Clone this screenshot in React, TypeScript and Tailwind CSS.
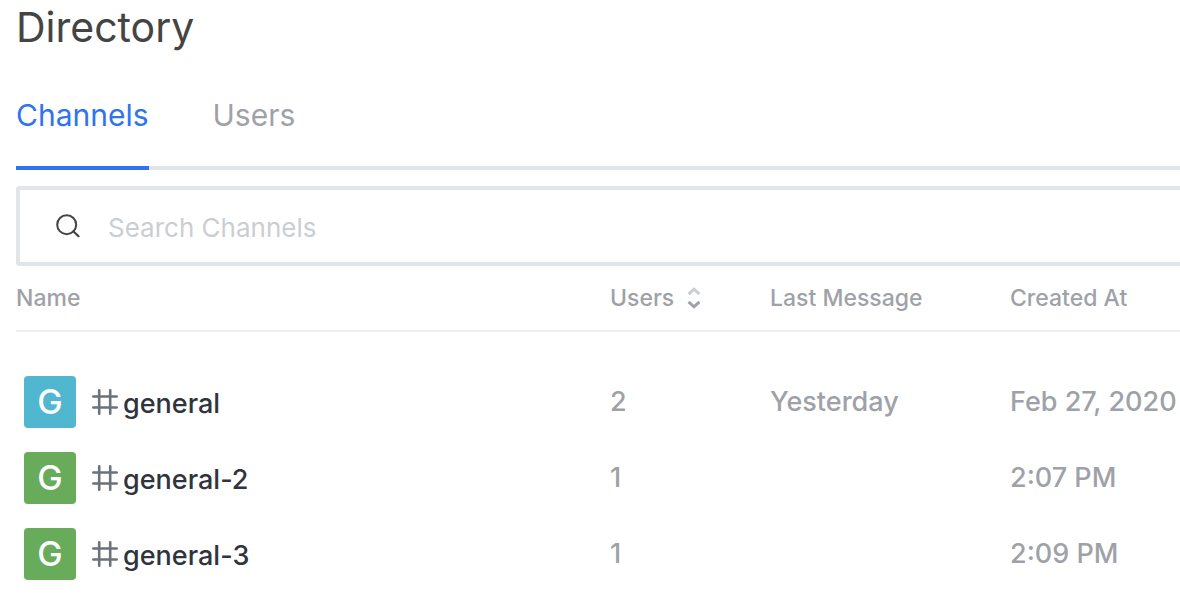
import { useState } from "react";

const tabs = ["Channels", "Users"];

const channels = [
  { name: "general", users: 2, lastMessage: "Yesterday", createdAt: "Feb 27, 2020", color: "bg-[#51b7d1]" },
  { name: "general-2", users: 1, lastMessage: "", createdAt: "2:07 PM", color: "bg-[#67ab5b]" },
  { name: "general-3", users: 1, lastMessage: "", createdAt: "2:09 PM", color: "bg-[#67ab5b]" },
];

function SearchIcon() {
  return (
    <svg className="size-6 shrink-0" viewBox="0 0 24 24" fill="none" stroke="#414345" strokeWidth="2" aria-hidden="true">
      <circle cx="10.7" cy="10.7" r="9.5" />
      <path d="M17.3 17.3l5.2 4.9" strokeWidth="2.2" strokeLinecap="round" />
    </svg>
  );
}

function SortIcon() {
  return (
    <svg className="w-4 h-6" viewBox="0 0 16 24" fill="none" strokeWidth="3" aria-hidden="true">
      <path d="M2.6 8.2L8 3.2l5.4 5" stroke="#cbced1" />
      <path d="M2.6 15.8l5.4 5 5.4-5" stroke="#9ea2a8" />
    </svg>
  );
}

function HashIcon() {
  return (
    <svg className="w-[26px] h-7 shrink-0" viewBox="0 0 26 28" fill="none" stroke="#6c727a" strokeWidth="2.6" strokeLinecap="round" aria-hidden="true">
      <path d="M7.2 2.3v23.4M18.2 2.3v23.4M1.3 8.5h23.4M1.3 19.5h23.4" />
    </svg>
  );
}

export default function App() {
  const [activeTab, setActiveTab] = useState("Channels");
  const [query, setQuery] = useState("");

  const rows = channels.filter((channel) => channel.name.includes(query.toLowerCase()));

  return (
    <main className="min-h-screen overflow-hidden bg-white pl-4 font-['Inter',sans-serif] text-[#9ea2a8]">
      <h1 className="pt-1 text-[41px] leading-[46px] text-[#444444]">Directory</h1>

      {/* Tabs */}
      <div className="mt-[30px] flex gap-16 border-b-4 border-[#e1e5e8]" role="tablist">
        {tabs.map((tab) => (
          <button
            key={tab}
            type="button"
            role="tab"
            aria-selected={activeTab === tab}
            onClick={() => setActiveTab(tab)}
            className={
              activeTab === tab
                ? "-mb-1 border-b-4 border-[#2f73ef] pt-4 pb-8 text-[30px] leading-[38px] text-[#2f73ef]"
                : "-mb-1 border-b-4 border-transparent pt-4 pb-8 text-[30px] leading-[38px]"
            }
          >
            {tab}
          </button>
        ))}
      </div>

      {/* Search */}
      <label className="mt-4 flex h-20 items-center gap-7 rounded-l border-4 border-r-0 border-[#e1e5e8] pl-9">
        <SearchIcon />
        <input
          type="text"
          aria-label="Search Channels"
          placeholder="Search Channels"
          value={query}
          onChange={(e) => setQuery(e.target.value)}
          className="min-w-0 flex-1 pt-1 text-[26px] leading-8 text-[#2f343d] outline-none placeholder:text-[#cbced1]"
        />
      </label>

      {/* Channel list */}
      <table className="w-full table-fixed text-left">
        <thead>
          <tr className="h-[65px] border-b-2 border-[#eeeff1] text-[23px] leading-8 whitespace-nowrap">
            <th className="font-medium">Name</th>
            <th className="w-40 font-medium">
              <button type="button" className="flex items-center gap-3">
                Users
                <SortIcon />
              </button>
            </th>
            <th className="w-60 font-medium">Last Message</th>
            <th className="w-[170px] font-medium">Created At</th>
          </tr>
        </thead>
        <tbody className="before:block before:h-8">
          {rows.map((channel) => (
            <tr key={channel.name} className="h-[76px] text-[27px] leading-8 font-medium whitespace-nowrap">
              <td className="pl-2">
                <div className="flex items-center">
                  <span className={`flex size-[52px] items-center justify-center rounded text-[34px] text-white ${channel.color}`}>
                    G
                  </span>
                  <span className="ml-4 flex items-center gap-[5px]">
                    <HashIcon />
                    <a href={`#${channel.name}`} className="pt-1 text-[#2f343d]">
                      {channel.name}
                    </a>
                  </span>
                </div>
              </td>
              <td>{channel.users}</td>
              <td>{channel.lastMessage}</td>
              <td>{channel.createdAt}</td>
            </tr>
          ))}
        </tbody>
      </table>
    </main>
  );
}
